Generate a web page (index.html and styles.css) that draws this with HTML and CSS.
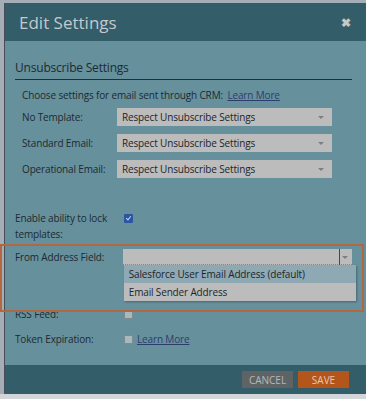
FILE: index.html
```html
<!DOCTYPE html>
<html lang="en">
  <head>
    <meta charset="UTF-8" />
    <title>Edit Settings</title>
    <link rel="stylesheet" href="styles.css">
  </head>
  <body>
    <div class="modal">
      <div class="modal-header">
        <h1>Edit Settings</h1>
        <span class="close">&#10006;</span>
      </div>

      <div class="modal-body">
        <h2>Unsubscribe Settings</h2>
        <p class="intro">
          Choose settings for email sent through CRM:
          <a href="#">Learn More</a>
        </p>

        <div class="row">
          <label>No Template:</label>
          <div class="select">Respect Unsubscribe Settings<span class="arrow"></span></div>
        </div>
        <div class="row">
          <label>Standard Email:</label>
          <div class="select">Respect Unsubscribe Settings<span class="arrow"></span></div>
        </div>
        <div class="row">
          <label>Operational Email:</label>
          <div class="select">Respect Unsubscribe Settings<span class="arrow"></span></div>
        </div>

        <div class="field lock">
          <label>Enable ability to lock templates:</label>
          <span class="check checked"></span>
        </div>

        <div class="field from">
          <label>From Address Field:</label>
          <div class="combo">
            <span class="cursor"></span>
            <span class="arrow"></span>
            <ul class="menu">
              <li class="active">Salesforce User Email Address (default)</li>
              <li>Email Sender Address</li>
            </ul>
          </div>
        </div>

        <div class="field rss">
          <label>RSS Feed:</label>
          <span class="check"></span>
        </div>

        <div class="field token">
          <label>Token Expiration:</label>
          <span class="check"></span>
          <a href="#">Learn More</a>
        </div>

        <div class="highlight"></div>
      </div>

      <div class="modal-footer">
        <button class="cancel">CANCEL</button>
        <button class="save">SAVE</button>
      </div>
    </div>
    <div class="under"></div>
  </body>
</html>
```

FILE: styles.css
```css
* {
  margin: 0;
  padding: 0;
  box-sizing: border-box;
}
body {
  font-family: "Open Sans", Arial, sans-serif;
  font-size: 10px;
  letter-spacing: -0.15px;
  color: #1d2a2f;
  background-color: #a5aeb7;
  padding-top: 3px;
  overflow: hidden;
}
.modal {
  margin-left: 4px;
  border-left: 1px solid #474e55;
  height: 391px;
  display: flex;
  flex-direction: column;
}
.modal-header {
  height: 38px;
  background-color: #345d6a;
  display: flex;
  align-items: center;
  justify-content: space-between;
  padding: 0 15px 0 14px;
}
h1 {
  font-weight: 400;
  font-size: 17px;
  letter-spacing: 0;
  color: #c3c9cd;
}
.close {
  color: #c3c9cd;
  font-size: 12px;
  font-weight: 700;
}
.modal-body {
  position: relative;
  flex: 1;
  background-color: #67909d;
  padding: 18px 14px 0 10px;
}
h2 {
  font-weight: 400;
  font-size: 12px;
  letter-spacing: -0.2px;
  padding-bottom: 3px;
  border-bottom: 1px solid #1f3138;
}
.intro {
  margin: 8px 0 6px 7px;
}
.intro a {
  margin-left: 2px;
}
a {
  color: #2c3e6c;
}
.row {
  display: flex;
  align-items: center;
  margin: 0 0 8px 7px;
}
.row label {
  width: 95px;
}
.select {
  position: relative;
  width: 215px;
  height: 18px;
  line-height: 18px;
  padding-left: 5px;
  background-color: #bcbcbc;
  color: #1d2529;
}
.arrow {
  position: absolute;
  right: 8px;
  top: 8px;
  border-left: 3px solid transparent;
  border-right: 3px solid transparent;
  border-top: 3px solid #7c7f80;
}
.field {
  display: flex;
  align-items: flex-start;
}
.field label {
  width: 109px;
  line-height: 16px;
}
.lock {
  margin-top: 32px;
}
.lock label {
  width: 96px;
  margin-right: 13px;
}
.check {
  width: 9px;
  height: 9px;
  margin-top: 4px;
  border: 1px solid #7b8b91;
  background-color: #a9b8bd;
  border-radius: 1px;
}
.check.checked {
  background-color: #2a55a5;
  border-color: #2a55a5;
  position: relative;
}
.check.checked::after {
  content: "";
  position: absolute;
  left: 2px;
  top: 0px;
  width: 2px;
  height: 4px;
  border-right: 1px solid #c7d3e6;
  border-bottom: 1px solid #c7d3e6;
  transform: rotate(40deg);
}
.from {
  margin-top: 7px;
}
.combo {
  position: relative;
  width: 232px;
  height: 16px;
  background-color: #bcbcbc;
  border-bottom: 1px dotted #d76b6b;
}
.combo .arrow {
  right: 4px;
  top: 7px;
}
.combo .cursor {
  position: absolute;
  right: 12px;
  top: 0;
  width: 1px;
  height: 16px;
  background-color: #2348a8;
}
.menu {
  position: absolute;
  top: 16px;
  left: 1px;
  width: 232px;
  list-style: none;
  color: #1d2529;
  background-color: #bcbcbc;
  box-shadow: 1px 1px 2px rgba(0, 0, 0, 0.3);
  z-index: 2;
}
.menu li {
  height: 18px;
  line-height: 18px;
  padding-left: 5px;
}
.menu li.active {
  background-color: #8fa9b4;
}
.rss {
  margin-top: 41px;
}
.token {
  margin-top: 9px;
}
.token a {
  margin-left: 4px;
  line-height: 16px;
}
.highlight {
  position: absolute;
  left: -5px;
  right: 2px;
  top: 203px;
  height: 68px;
  border: 2px solid #b1673f;
  pointer-events: none;
  z-index: 3;
}
.modal-footer {
  height: 29px;
  background-color: #345d6a;
  display: flex;
  justify-content: flex-end;
  align-items: center;
  gap: 5px;
  padding-right: 17px;
}
button {
  width: 51px;
  height: 17px;
  border: none;
  font-family: "Open Sans", Arial, sans-serif;
  font-size: 10px;
}
.cancel {
  background-color: #5e6466;
  color: #b4b8ba;
}
.save {
  background-color: #b4561c;
  color: #e6c8b2;
}
.under {
  height: 6px;
  background-color: #d3d6d8;
}
```
